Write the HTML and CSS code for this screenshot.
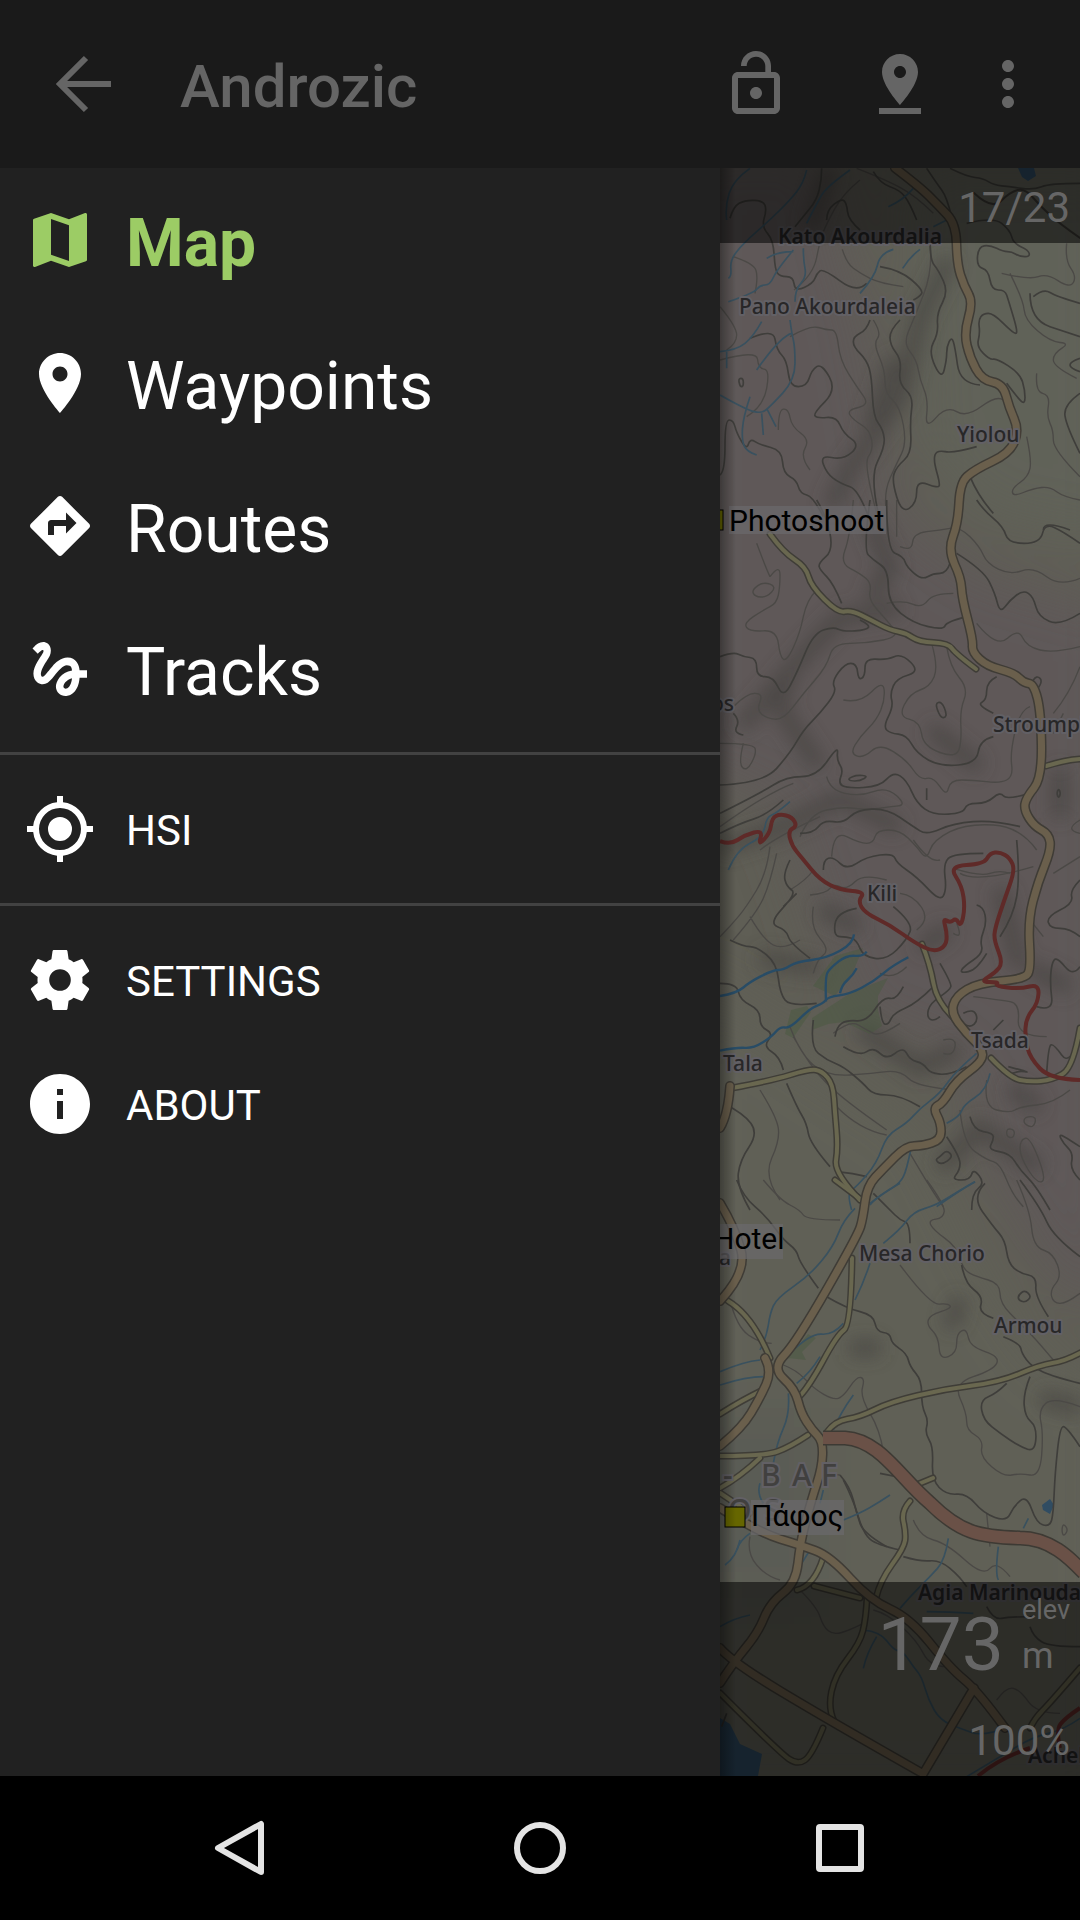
FILE: index.html
```html
<!DOCTYPE html>
<html lang="en">
<head>
<meta charset="utf-8">
<meta name="viewport" content="width=device-width, initial-scale=1">
<title>Androzic</title>
<link rel="stylesheet" href="styles.css">
</head>
<body>
<header class="toolbar">
  <button class="icon-button back" aria-label="Back"><svg class="icon" viewBox="0 0 72 72"><path d="M63 36H13M38 10 12 36l26 26" fill="none" stroke="currentColor" stroke-width="6"/></svg></button>
  <h1 class="title">Androzic</h1>
  <div class="actions">
    <button class="icon-button" aria-label="Unlock"><svg class="icon" viewBox="0 0 24 24"><path d="M18 8h-1V6c0-2.76-2.24-5-5-5S7 3.240 7 6h1.900c0-1.710 1.390-3.100 3.100-3.100s3.100 1.390 3.100 3.100v2H6c-1.100 0-2 .9-2 2v10c0 1.100.9 2 2 2h12c1.100 0 2-.9 2-2V10c0-1.100-.9-2-2-2zm0 12H6V10h12v10zm-6-3c1.100 0 2-.9 2-2s-.9-2-2-2-2 .9-2 2 .9 2 2 2z"/></svg></button>
    <button class="icon-button" aria-label="Drop waypoint"><svg class="icon" viewBox="0 0 24 24"><path d="M18 8c0-3.310-2.690-6-6-6S6 4.690 6 8c0 4.500 6 11 6 11s6-6.500 6-11zm-8 0c0-1.100.9-2 2-2s2 .9 2 2-.89 2-2 2c-1.100 0-2-.9-2-2zM5 20v2h14v-2H5z"/></svg></button>
    <button class="icon-button more" aria-label="More options"><svg class="icon" viewBox="0 0 24 24"><path d="M12 8c1.100 0 2-.9 2-2s-.9-2-2-2-2 .9-2 2 .9 2 2 2zm0 2c-1.100 0-2 .9-2 2s.9 2 2 2 2-.9 2-2-.9-2-2-2zm0 6c-1.100 0-2 .9-2 2s.9 2 2 2 2-.9 2-2-.9-2-2-2z"/></svg></button>
  </div>
</header>

<main class="content">
  <nav class="drawer" aria-label="Main">
    <ul class="group">
      <li><a class="item primary active" href="#map"><svg class="icon" viewBox="0 0 24 24"><path d="M20.500 3l-.16.030L15 5.100 9 3 3.360 4.900c-.21.070-.36.250-.36.480V20.500c0 .28.220.5.500.5l.16-.030L9 18.900l6 2.100 5.640-1.900c.21-.070.360-.250.360-.480V3.500c0-.28-.22-.5-.5-.5zM15 19l-6-2.110V5l6 2.110V19z"/></svg><span class="text">Map</span></a></li>
      <li><a class="item primary" href="#waypoints"><svg class="icon" viewBox="0 0 24 24"><path d="M12 2C8.130 2 5 5.130 5 9c0 5.250 7 13 7 13s7-7.750 7-13c0-3.870-3.130-7-7-7zm0 9.500c-1.380 0-2.500-1.120-2.500-2.500s1.120-2.500 2.500-2.500 2.500 1.120 2.500 2.500-1.120 2.500-2.500 2.500z"/></svg><span class="text">Waypoints</span></a></li>
      <li><a class="item primary" href="#routes"><svg class="icon" viewBox="0 0 24 24"><path d="M21.710 11.290l-9-9c-.39-.39-1.020-.39-1.410 0l-9 9c-.39.39-.39 1.020 0 1.410l9 9c.39.39 1.020.39 1.410 0l9-9c.39-.38.39-1.010 0-1.410zM14 14.500V12h-4v3H8v-4c0-.55.450-1 1-1h5V7.500l3.500 3.500-3.500 3.500z"/></svg><span class="text">Routes</span></a></li>
      <li><a class="item primary" href="#tracks"><svg class="icon" viewBox="0 0 24 24"><path d="M4.590 6.890c.7-.71 1.400-1.350 1.710-1.220.5.200 0 1.030-.3 1.520-.25.420-2.860 3.890-2.860 6.310 0 1.280.480 2.340 1.340 2.980.75.560 1.740.730 2.640.460 1.070-.31 1.950-1.400 3.060-2.770 1.210-1.490 2.830-3.440 4.080-3.440 1.630 0 1.650 1.010 1.760 1.790-3.780.64-5.380 3.670-5.380 5.370s1.440 3.090 3.210 3.090c1.630 0 4.290-1.330 4.690-6.100H21v-2.500h-2.470c-.15-1.650-1.090-4.200-4.030-4.200-2.250 0-4.180 1.910-4.940 2.840-.58.730-2.060 2.480-2.290 2.720-.25.300-.68.840-1.110.84-.45 0-.72-.83-.36-1.920.35-1.090 1.400-2.860 1.850-3.520.78-1.140 1.300-1.920 1.300-3.280C8.950 3.690 7.310 3 6.440 3 5.120 3 3.970 4 3.720 4.250c-.36.360-.66.660-.88.930l1.750 1.710zm9.290 11.660c-.31 0-.74-.26-.74-.72 0-.6.730-2.200 2.870-2.760-.3 2.690-1.430 3.480-2.130 3.480z"/></svg><span class="text">Tracks</span></a></li>
    </ul>
    <ul class="group">
      <li><a class="item" href="#hsi"><svg class="icon" viewBox="0 0 24 24"><path d="M12 8a4 4 0 1 0 0 8 4 4 0 0 0 0-8zm8.940 3A8.990 8.990 0 0 0 13 3.060V1h-2v2.060A8.990 8.990 0 0 0 3.060 11H1v2h2.060A8.990 8.990 0 0 0 11 20.940V23h2v-2.060A8.990 8.990 0 0 0 20.940 13H23v-2h-2.060zM12 19a7 7 0 1 1 0-14 7 7 0 0 1 0 14z"/></svg><span class="text">HSI</span></a></li>
    </ul>
    <ul class="group">
      <li><a class="item" href="#settings"><svg class="icon" viewBox="0 0 24 24"><path d="M19.430 12.980c.04-.32.070-.64.070-.98s-.03-.66-.07-.98l2.110-1.650c.19-.15.240-.42.120-.64l-2-3.460c-.12-.22-.39-.3-.61-.22l-2.490 1c-.52-.4-1.080-.73-1.690-.98l-.38-2.650C14.460 2.180 14.250 2 14 2h-4c-.25 0-.46.180-.49.420l-.38 2.650c-.61.250-1.170.590-1.690.980l-2.490-1c-.23-.09-.49 0-.61.220l-2 3.460c-.13.220-.07.490.12.640l2.110 1.650c-.04.320-.07.650-.07.980s.03.660.07.980l-2.110 1.650c-.19.150-.24.420-.12.640l2 3.460c.12.220.39.300.61.220l2.490-1c.52.400 1.080.730 1.690.980l.38 2.650c.03.240.24.420.49.420h4c.25 0 .46-.18.490-.42l.38-2.650c.61-.25 1.170-.59 1.690-.98l2.490 1c.23.090.49 0 .61-.22l2-3.460c.12-.22.070-.49-.12-.64l-2.110-1.650zM12 15.600A3.600 3.600 0 1 1 12 8.400a3.600 3.600 0 0 1 0 7.200z"/></svg><span class="text">SETTINGS</span></a></li>
      <li><a class="item" href="#about"><svg class="icon" viewBox="0 0 24 24"><path d="M12 2C6.480 2 2 6.480 2 12s4.480 10 10 10 10-4.480 10-10S17.520 2 12 2zm1 15h-2v-6h2v6zm0-8h-2V7h2v2z"/></svg><span class="text">ABOUT</span></a></li>
    </ul>
  </nav>

  <section class="map" id="map" aria-label="Map">
    <svg class="map-canvas" viewBox="0 0 360 1608" preserveAspectRatio="xMinYMin slice">
      <defs>
        <filter id="soft" x="-50%" y="-50%" width="200%" height="200%"><feGaussianBlur stdDeviation="9"/></filter>
        <filter id="softer" x="-50%" y="-50%" width="200%" height="200%"><feGaussianBlur stdDeviation="28"/></filter>
      </defs>
      <rect width="360" height="1608" fill="#5f5e55"/>
      <!-- land tint -->
      <g filter="url(#softer)">
        <path fill="#5f5958" d="M-40-20H110L120 60 150 160 180 340 260 400 400 440V880L260 900 210 880 130 850 60 640-40 600z"/>
        <path fill="#5f5958" d="M240 880H400V1160L330 1110 260 990z"/>
        <path fill="#616258" d="M190 0H400V380L260 350 200 280z"/>
        <path fill="#606157" d="M0 830 200 960 270 1100 330 1190 400 1220V1640H-40V800z"/>
        <path fill="#5a5b55" d="M-20 1240H100V1430H-20z"/>
      </g>
      <!-- hill shading -->
      <g class="shade" filter="url(#soft)">
        <path d="M110 0 90 60M230 90 200 150 180 230 130 300 110 340M175 190 150 260M150 350 170 400 150 430"/>
        <path d="M20 560 90 480 120 450 180 440M0 680 60 660 120 630 180 660M70 500 60 540 100 600M210 560 260 600"/>
        <path d="M100 740 140 760M40 790 100 800M140 860 200 900 240 880M200 780 230 760M280 720 300 800M310 800 350 820M340 600V650"/>
        <path d="M220 1000 260 960 320 1000M240 1130 230 1160M130 1180h30M320 1230 360 1240M290 920 320 940"/>
      </g>
      <!-- woodland -->
      <g fill="#47583f" opacity=".45">
        <path d="m93 818 22-30 28-8-10 24-18 24zM92 850l40-26 36-14-10 18v14l4 16-12 8-26-12-16 2-16 6zM71 842l16-4 4 6-18 26-8-4z"/>
        <path d="m60 1200 28-34 8 4-14 14 4 8-18-2-10 14z"/>
      </g>
      <!-- water -->
      <g fill="#304c62">
        <path d="m298 0 16 0 2 8-8 5-6-4zM322 1337l8-6 4 6-4 9-7-4zM0 1550l10 6 10 20 22 10-4 22H0z"/>
      </g>

      <!-- minor contours -->
      <g class="contour" transform="translate(-20 -8) scale(.333333)">
        <path d="M282 390 340 345 360 240 380 190 430 100 480 60 M427 268 440 310 480 340 540 370 610 380 M470 25 560 60 650 110 700 160M520 480 545 520 520 550 555 630 555 700 600 740 620 850 590 910 550 1000 560 1060M690 240 700 330 640 480 610 550 650 600 660 660 685 720 675 810 740 737 800 773 890 705 910 720M905 340 990 360 1040 340 1110 385 1130 350 1095 300 1100 250M930 340 970 420 975 480 1050 545 1110 550 1060 580 1060 620 1130 655M1010 640 1006 695 1050 705 1040 770 1060 810 1060 870 1140 950M980 830 995 900 985 950 935 985 940 1010 1000 985 1050 980 1090 1010 1140 1020M270 530 330 495 380 510 410 510 420 600 470 680 510 735 440 750 460 780 510 810 520 870 490 910 530 1060M60 600 170 570 175 625 210 630 190 740 140 770M235 810 235 750 265 745 275 800 330 840 300 890 330 930M60 440 110 500 110 550 80 570M100 290 160 310 175 350 165 400"/>
      </g>
      <g class="contour" transform="translate(-20 332) scale(.333333)">
        <path d="M210 230 240 190 240 260 230 310 190 330 130 370 150 395 230 390 240 470 260 485 300 400 320 300 350 270M170 130 200 210 210 230M155 270 190 245 230 260 200 292 165 290zM460 0 450 110 420 190 480 220 515 250 505 300 560 360 600 410 500 430 400 430 380 500 310 580 250 660 200 655 170 630 190 580 140 580 100 620M600 140 635 155 640 100 720 90 780 80 840 140 860 190 930 225 1000 200 1080 260 1140 235M560 310 610 300 665 325 700 280 760 280M830 370 890 445 955 385 980 440 1060 460 1140 440M695 430 715 500 690 560 630 580 595 650 660 665 670 740 770 775 785 720 780 630 805 565 750 500 740 440M430 600 480 610 550 540 555 600 530 660 480 710 450 760 490 775 540 730 620 780 660 840 700 830 740 890 750 840 820 840 900 850 940 830 930 760 960 630 990 620M60 730 160 730 170 760 140 815 115 790 130 730M380 830 390 870 480 890 560 860 620 915 570 920 500 930 430 920 330 940 300 1010M180 1050 230 1010 360 950M60 980 200 880 280 850M1090 640 1060 700M1140 1000 1090 990 1140 960M590 0 590 110M1060 640 1110 580 1140 500M395 1070 400 990 480 1030 520 1030 530 990 600 990 650 1040 680 1080 700 1020 800 970 960 980 1010 1050"/>
      </g>
      <g class="contour" transform="translate(-20 672) scale(.333333)">
        <path d="M210 20 200 100 140 200 90 260 60 290M230 40 210 130 170 220 100 300M270 150 320 120 340 90M150 230 190 300 250 330 300 300M330 165 380 160 400 130 440 150 490 100 560 120M340 200 330 260 390 330 350 360 340 400M600 160 640 165 690 240 650 270M760 85 840 110 900 90 930 100M640 0 690 70 720 60M760 280 790 300 770 250M780 100 830 130 1000 80M1060 100 1140 50M1030 290 990 240M280 590 330 680 430 780 560 870M270 560 300 640 380 710 520 700 600 690 650 740 760 750M400 580 450 540 500 570 540 590 600 550M540 400 580 420 620 380M820 470 900 480 960 490 950 590 1040 590M730 600 770 590 760 650 730 640M960 900 990 890 1040 1020 1010 1030 960 950zM975 830 1010 830 1000 865 970 850zM920 865 945 870 940 895 920 890zM860 720 850 800 930 820 960 800 1060 790 1110 750M780 810 790 910 860 960 900 970 940 1070 970 1100M180 750 230 830 240 900 190 1010 240 1080M410 800 480 870 560 885M630 940 700 1060 730 1100"/>
      </g>
      <g class="contour" transform="translate(-20 1012) scale(.333333)">
        <path d="M190 0 240 60 300 90 320 120 420 120M680 0 735 75 730 115 685 120 700 150 770 200 790 270 830 290 900 310 900 370 960 430 1010 480 1060 540M600 255 690 375 745 370 755 385 690 405 680 435 715 470 720 540 770 520 770 460 800 445 810 500 900 530 880 570 760 610 800 700 800 750 850 780 840 830 910 890 960 880 1020 890 1030 760 1015 690 1060 650 1140 680M950 0 990 90 1000 200 1060 220 1085 290 1050 330 1060 370 1100 370 1140 340M250 555 290 570 340 625 400 660 430 650 470 590 495 595 480 650 540 750 550 815M90 360 110 440 180 490 215 490M420 885 370 880M870 1100 860 1000"/>
      </g>
      <g class="contour" transform="translate(-20 1312) scale(.333333)">
        <path d="M640 120 660 170 740 190 850 290 890 240 930 290M150 170 140 220 200 290 240 300M300 330 350 380 370 440 400 465 450 450 490 430M520 390 560 400 650 480 690 560 740 560M890 660 920 620 960 630 1010 700 1080 700M1090 130 1105 150 1090 170 1085 150z"/>
      </g>

      <!-- index contours -->
      <g class="contour index" transform="translate(-20 -8) scale(.333333)">
        <path d="M365 25 365 60 350 120 310 170 285 200M90 175 100 140 135 120 190 122 200 150 185 200 220 240 225 330 240 350 280 350 285 395 340 370 350 340 370 325 470 400 500 370M520 35 540 70 600 90 630 130 650 180M380 180 380 150 425 115 440 130 445 180 480 210M680 25 710 70 740 110 755 170M750 25 800 50 850 55 880 75 930 80 1000 90 1050 70 1140 70M800 190 880 170 930 210 940 250 985 270 990 290 960 290 935 275 910 275 870 255 835 260 830 320 865 330 875 390 915 390 925 420 955 520 940 520 880 460 850 460 835 480 840 520 830 560 870 600 890 595 960 640 975 690 975 735 950 710 920 670M540 320 600 330 670 390 660 410 640 420M690 240 690 300 715 330 745 395 710 460 715 520 685 575 725 660 740 600 740 560 755 530 765 560 780 670 840 675M1000 410 1030 385 1070 410 1140 430M990 400 990 440 1020 490 1080 510 1140 530M1140 595 1110 605 1110 625 1140 635M510 480 500 510 460 530 460 560 500 600 515 650 520 770 550 810 555 860 510 950 535 1060M600 480 570 510 570 555 605 600 595 670 640 710 630 780 635 880 590 920 575 960 605 1060 650 1030 650 960 715 985 720 970 700 900 710 870 760 880 830 860M150 535 220 505 230 570 260 600 270 680 320 680 335 630 365 610 410 690 340 760 350 775 410 770 430 820 480 855 430 900 360 885 380 940 420 970 480 990 520 1110M60 945 75 935 75 780 100 780 110 820 140 870 150 835 180 855 245 870 250 940 290 960 300 1000 340 1010 370 1070M115 655 130 655 130 680 120 680zM1140 700 1090 735 1100 800 1140 880M810 950 835 1010 880 1060M1030 1110 1030 1080 1110 1110"/>
      </g>
      <g class="contour index" transform="translate(-20 332) scale(.333333)">
        <path d="M510 0 490 150 520 180 565 210 565 310 640 370 730 390 740 365 800 350M560 0 560 150 610 170 620 200 665 240 700 220 740 220 750 190M350 0 380 50 400 150 355 190 360 210 400 250 425 310M830 0 850 30 910 80 925 130 1020 130 1035 70 1090 95 1140 130M770 160 850 210 885 280 900 340 930 300 970 270 1000 290 1015 350 1080 378 1140 340M60 470 100 455 130 470 170 475 170 530 220 530 250 595 290 520 340 400 400 380 430 395 500 390 510 375 480 360M60 855 190 850 270 760 310 690 360 640 410 575 395 545 435 490 470 490 475 540 495 530 495 475 560 480 605 460 660 515 590 535 570 580 580 620 550 680 570 700 620 705 650 760 720 800 830 790 840 720 880 710M705 610 725 605 740 640 735 655 720 650zM890 530 860 545 860 600 830 615 880 640M60 940 180 880 260 830 350 830 415 735 410 780 430 810 415 850 440 865 540 860 580 815 620 840 650 910 700 945 790 940 800 910 860 910 900 875 920 900 990 880M60 1000 120 970 200 945 250 900M300 1000 340 1000 370 960 430 970 470 930 560 925 640 980 680 1005 760 970 880 960 960 980M680 865 680 900M1070 880 1076 865 1082 880 1076 895zM445 835 470 825 505 828 480 843 450 843zM100 640 120 660 100 700 130 705M1000 540 1010 525 1030 545 1010 570"/>
      </g>
      <g class="contour index" transform="translate(-20 672) scale(.333333)">
        <path d="M370 90 370 60 400 50 440 90 500 50 580 40 590 70 650 110 720 185 740 150 730 70 760 40 850 40M270 60 250 100 260 140 290 160 205 250 260 270 270 310 330 355M290 160 250 200M470 205 410 215 400 290 440 290 470 300 490 350 560 360 620 300 640 250 580 200M60 430 110 430 120 480 180 510 180 560 220 580 190 620 240 650 250 690M90 300 130 320 170 320 230 370 240 460 270 500 350 490M340 540 330 620 380 660 430 680 490 730 520 765 600 765 660 800M405 590 410 560 440 540 500 545 550 470 590 480 610 440M540 500 545 550 565 555 580 520 650 490 700 440M430 620 480 650 520 620 560 660 610 620 630 660 670 670 690 700 750 705 800 680M830 195 850 200 860 250 840 300 850 340 790 380 780 400 830 390 860 340M720 370 755 430 750 450 690 490 680 530 700 545 720 530M790 520 820 505 835 540 810 565 790 550M1140 120 1110 150 1120 190 1040 230 1050 265 1110 265 1140 290M950 0 960 110 940 230 900 290M1140 380 1120 410 1070 350 1055 370 1050 430 1060 515 1010 500M1140 590 1110 680 1060 610 1045 620 1040 700M720 950 740 930 760 950 725 975 705 960zM740 890 780 950 780 990 755 1020 810 1020 820 985 855 1030 815 1060 815 1110M810 830 820 870 880 880 880 900 865 930 930 940 960 990 1010 1040 1050 1110M1140 920 1110 900 1075 880 1090 910 1120 940 1110 990 1140 1020M70 790 130 820 175 880 120 960 110 1040 150 1110M260 730 290 800 320 850 330 910 390 980M410 995 460 1000 500 1010M60 225 30 240M910 540 880 570M925 680 1000 700 950 690 920 710"/>
      </g>
      <g class="contour index" transform="translate(-20 1012) scale(.333333)">
        <path d="M110 0 130 50 200 110 250 180 290 210 300 250 355 325M380 350 440 385 520 405 530 455 570 460 575 490 620 520 630 560 665 600 665 680 685 720 675 760 700 800 695 900 740 945 800 940 850 1000 920 1025 940 980 980 945 1010 1030 1050 1040 1060 1000 1065 880 1080 740 1100 740 1140 800M520 40 570 90 600 120 630 130 630 190M855 10 815 50 880 140 915 180 925 250 960 280 1010 290 1005 350 1045 410M960 0 1020 80 1060 170 1140 230M785 255 795 310 850 350 835 400 880 415M955 345 975 330 995 350 975 368 955 360zM910 470 960 490 965 520 995 560 1060 590 1140 610M990 590 970 640 975 710 1010 740 1005 815 960 800 900 760 850 720 840 660 890 640 920 610M420 885 450 920 470 1000 490 1060 560 1100M540 880 640 900"/>
      </g>
      <g class="contour index" transform="translate(-20 1312) scale(.333333)">
        <path d="M430 0 460 60 490 160 530 195 600 210M610 230 660 245 720 240 780 290 800 320M860 380 880 420 930 410 1000 410M990 440 1000 470 1050 500 1140 500M65 740 80 700"/>
      </g>

      <!-- streams -->
      <g class="stream" transform="translate(-20 -8) scale(.333333)">
        <path d="M150 25 100 60 75 140 80 180M320 30 310 70 270 120 210 180 130 250 90 300 95 350 85 355M450 30 380 80 350 130 320 190M280 270 230 330 210 375 180 375 160 400 85 425M200 295 230 275 280 275M310 265 310 300 320 350 285 390 285 425M580 268 540 280 525 350 480 400M660 268 630 290 608 325M640 85 610 120 565 140M740 180 700 200M270 480 275 520 285 560 285 660 210 740 185 760 140 750 60 705M60 575 110 570 160 530 185 485M275 520 240 530 170 630M150 710 130 770 125 840 140 875 170 885M185 760 190 825M200 745 228 800M80 575 80 625"/>
      </g>
      <g class="stream" transform="translate(-20 332) scale(.333333)"><path d="M270 905 230 940 200 950 190 1010 110 1050 85 1110"/></g>
      <g class="stream river" transform="translate(-20 672) scale(.333333)">
        <path d="M60 468 110 460 150 425 220 390 250 390 290 365 380 355 460 310 462 283M60 632 110 622 160 625 215 590 240 560 270 565 330 505 370 490 385 470 450 462 520 425 580 375 625 352M378 485 375 410 390 385 440 345 490 350 500 335M420 460 425 435 460 405 470 385"/>
      </g>
      <g class="stream" transform="translate(-20 672) scale(.333333)">
        <path d="M830 640 770 690 720 760 660 805 620 850 560 885 530 970 470 1040 440 1060 455 1110M870 700 860 750 790 795 780 830 740 850M632 930 620 990 600 1030 550 1060 510 1090M825 1025 780 1050 710 1100"/>
      </g>
      <g class="stream" transform="translate(-20 1012) scale(.333333)">
        <path d="M600 10 530 50 510 75M825 5 780 30 710 75 640 95 600 150 550 190M510 250 490 310 465 360M465 85 430 120 400 200 330 285 230 355 210 400 200 470 180 510M60 575 130 545 180 540M60 615 140 590 190 590M270 520 330 460 400 465 430 430M360 530 330 580 290 610M265 640 270 700 230 790 220 850M460 645 420 700 400 750M180 910 170 940 190 970M370 930 360 970M570 945 540 965 480 1000 430 1020M110 1110 120 1080 150 1060M985 1015 970 1045"/>
      </g>
      <g class="stream" transform="translate(-20 1312) scale(.333333)">
        <path d="M120 180 110 230 75 255M330 210 305 250M745 175 735 240 690 290 630 350 600 385M895 200 885 280 895 300M60 440 100 415 150 405M490 450 540 455 580 510 610 515 640 560 665 590 685 660 720 720 780 745 850 770 930 740M530 470 500 520 490 565M680 395 750 395 820 400M1140 715 1090 750 1000 770 900 830 800 890"/>
      </g>

      <!-- minor roads: casing, then fill -->
      <g class="road minor-case">
        <path d="M50 366 63 384 86 399 91 418 118 445 131 442 151 452 170 462 186 465 199 474 228 475 236 486 256 501"/>
        <path d="M326 598 345 592 360 591M202 776 210 796 217 835 236 852M12 920 50 913 90 901 102 903 113 916 115 945 118 980 114 1005 140 1032M271 890 290 910 310 914 332 912 353 900 360 860"/>
        <path d="M115 1012 143 1033M132 1090 131 1157 117 1167 90 1217 80 1228M8 1133 32 1147 50 1190M0 1246 22 1232 43 1222M107 1264 115 1253 140 1249 170 1234 225 1221 280 1214 320 1197 345 1193 360 1185M0 1288 45 1288 70 1279 88 1267M0 1320 20 1309 40 1290M196 1317 213 1310M190 1333 181 1343 186 1365 184 1380 160 1413 156 1430M0 1325 30 1345M77 1422 94 1418 103 1390M94 1418 140 1430M147 1430 146 1450 140 1475 115 1507 108 1540 114 1553M0 1525 60 1585 78 1597 92 1587 103 1560M360 1500 330 1535 315 1550 310 1560"/>
      </g>
      <g class="road minor">
        <path d="M50 366 63 384 86 399 91 418 118 445 131 442 151 452 170 462 186 465 199 474 228 475 236 486 256 501"/>
        <path d="M326 598 345 592 360 591M202 776 210 796 217 835 236 852M12 920 50 913 90 901 102 903 113 916 115 945 118 980 114 1005 140 1032M271 890 290 910 310 914 332 912 353 900 360 860"/>
        <path d="M115 1012 143 1033M132 1090 131 1157 117 1167 90 1217 80 1228M8 1133 32 1147 50 1190M0 1246 22 1232 43 1222M107 1264 115 1253 140 1249 170 1234 225 1221 280 1214 320 1197 345 1193 360 1185M0 1288 45 1288 70 1279 88 1267M0 1320 20 1309 40 1290M196 1317 213 1310M190 1333 181 1343 186 1365 184 1380 160 1413 156 1430M0 1325 30 1345M77 1422 94 1418 103 1390M94 1418 140 1430M147 1430 146 1450 140 1475 115 1507 108 1540 114 1553M0 1525 60 1585 78 1597 92 1587 103 1560M360 1500 330 1535 315 1550 310 1560"/>
      </g>
      <!-- main roads: casing, then fill -->
      <g class="road main-case">
        <path d="M175 0 200 19 219 38 236 56 237 96 244 118 253 134 244 165 250 190 262 212 283 216 289 239 299 262 290 285 254 302 240 315 238 355 228 382 241 410 242 430 253 472 252 484 267 498 294 505 304 515 314 516 321 545 322 610 306 630 304 642 314 658 329 666 331 682 318 714 308 752 311 800 305 811 258 815 236 828 231 845 246 865 262 880 263 893 236 913 223 935 213 940 221 955 221 972 202 978 186 978 164 1000 147 1018 143 1050 138 1067 76 1175 52 1200 75 1221 81 1245 92 1262 103 1273 102 1300 92 1330 80 1375 76 1415 50 1435 38 1465 13 1495 0 1515M45 1190 52 1203 40 1230 22 1260 0 1278M0 1035 15 1060 27 1104 0 1133M10 918 8 947 0 960M0 1340 40 1365 80 1377 110 1388 150 1432 190 1450 230 1500 258 1523 285 1560M0 1480 12 1494 110 1553 200 1604M254 1520 203 1606"/>
      </g>
      <g class="road main">
        <path d="M175 0 200 19 219 38 236 56 237 96 244 118 253 134 244 165 250 190 262 212 283 216 289 239 299 262 290 285 254 302 240 315 238 355 228 382 241 410 242 430 253 472 252 484 267 498 294 505 304 515 314 516 321 545 322 610 306 630 304 642 314 658 329 666 331 682 318 714 308 752 311 800 305 811 258 815 236 828 231 845 246 865 262 880 263 893 236 913 223 935 213 940 221 955 221 972 202 978 186 978 164 1000 147 1018 143 1050 138 1067 76 1175 52 1200 75 1221 81 1245 92 1262 103 1273 102 1300 92 1330 80 1375 76 1415 50 1435 38 1465 13 1495 0 1515M45 1190 52 1203 40 1230 22 1260 0 1278M0 1035 15 1060 27 1104 0 1133M10 918 8 947 0 960M0 1340 40 1365 80 1377 110 1388 150 1432 190 1450 230 1500 258 1523 285 1560M0 1480 12 1494 110 1553 200 1604M254 1520 203 1606"/>
      </g>
      <g class="trunk-road">
        <path class="trunk-case" d="M103 1270H125C160 1272 180 1310 210 1335 240 1365 260 1369 300 1370 330 1370 350 1390 364 1405"/>
        <path class="trunk" d="M103 1270H125C160 1272 180 1310 210 1335 240 1365 260 1369 300 1370 330 1370 350 1390 364 1405"/>
      </g>
      <g class="road path"><path d="M254 25 272 42 290 24 305 20 320 38 340 56 360 70"/></g>

      <!-- recorded track -->
      <g class="track">
        <path d="M0 673 10 677 25 667 43 662 38 678 50 665 52 650 60 646 72 649 77 658 68 663 72 678 82 690 100 712 120 722 145 724 138 733 145 745 170 757 195 775 214 784 226 778 227 765 223 750 230 755 236 750 241 759 245 740 242 718 229 698 264 696 270 685 280 684 290 690 295 702 285 730 275 760 274 772 283 795 275 805 260 814 279 814 275 818 300 821 319 816 318 835 306 850 305 870 310 890 330 911 360 912M360 1540 345 1550 336 1562 340 1580M258 1608 280 1590 310 1580"/>
      </g>

      <!-- place names -->
      <g class="place">
        <text class="bold" x="58" y="76">Kato Akourdalia</text>
        <text x="19" y="146">Pano Akourdaleia</text>
        <text x="237" y="274">Yiolou</text>
        <text x="-9" y="543">os</text>
        <text x="273" y="564">Stroumpi</text>
        <text x="147" y="733">Kili</text>
        <text x="251" y="880">Tsada</text>
        <text x="3" y="903">Tala</text>
        <text x="139" y="1093">Mesa Chorio</text>
        <text x="274" y="1165">Armou</text>
        <text x="-1" y="1097">a</text>
        <text class="bold" x="198" y="1432">Agia Marinouda</text>
        <text class="bold" x="308" y="1595">Acheleia</text>
      </g>
      <g class="district">
        <text x="3" y="1318">-</text><text x="41" y="1318">B</text><text x="72" y="1318">A</text><text x="101" y="1318">F</text>
        <text x="8" y="1353">O</text><text x="44" y="1353">S</text>
      </g>

      <!-- waypoints -->
      <g class="waypoint">
        <rect class="plate" x="9" y="338" width="157" height="28"/>
        <rect class="marker" x="-17" y="342" width="20" height="20"/>
        <text x="9" y="363">Photoshoot</text>
        <rect class="plate" x="-10" y="1056" width="73" height="35"/>
        <text x="-7" y="1081">Hotel</text>
        <rect class="plate" x="31" y="1332" width="93" height="35"/>
        <rect class="marker" x="5" y="1339" width="20" height="20"/>
        <text x="31" y="1358">Πάφος</text>
      </g>
    </svg>

    <div class="panel panel-top"><output class="reading">17/23</output></div>
    <div class="panel panel-bottom">
      <div class="elevation">
        <output class="value">173</output>
        <div class="units"><span class="label">elev</span><span class="unit">m</span></div>
      </div>
      <output class="reading">100%</output>
    </div>
  </section>
</main>

<nav class="system-bar" aria-label="System">
  <button class="system-button" aria-label="Back"><svg class="icon" viewBox="0 0 72 72"><path d="M57 12v48L14 36z"/></svg></button>
  <button class="system-button" aria-label="Home"><svg class="icon" viewBox="0 0 72 72"><circle cx="36" cy="36" r="23"/></svg></button>
  <button class="system-button" aria-label="Recent apps"><svg class="icon" viewBox="0 0 72 72"><rect x="15" y="15" width="42" height="42" rx="1"/></svg></button>
</nav>
<script src="map.js"></script>
</body>
</html>
```

FILE: styles.css
```css
* {
  box-sizing: border-box;
}

body {
  margin: 0;
  min-height: 100vh;
  display: flex;
  flex-direction: column;
  background: #000;
  color: #fff;
  font-family: Roboto, "Noto Sans", sans-serif;
}

button {
  padding: 0;
  border: 0;
  background: none;
  color: inherit;
  font: inherit;
}

.icon {
  display: block;
  flex: none;
  width: 72px;
  height: 72px;
  fill: currentColor;
}

/* Toolbar */
.toolbar {
  display: flex;
  align-items: center;
  height: 168px;
  padding: 0 36px 0 48px;
  background: #1a1a1a;
  color: #656565;
}

.title {
  margin: 0 0 0 60px;
  padding-top: 6px;
  font-size: 60px;
  line-height: 72px;
  font-weight: 500;
}

.actions {
  display: flex;
  gap: 72px;
  margin-left: auto;
}

.more {
  margin-left: -36px;
}

/* Content */
.content {
  flex: 1;
  display: grid;
  grid-template-columns: 2fr 1fr;
}

/* Drawer */
.drawer {
  background: #212121;
}

.group {
  margin: 0;
  padding: 0 0 12px;
  list-style: none;
}

.group + .group {
  padding-top: 12px;
  border-top: 3px solid #424242;
}

.item {
  display: flex;
  align-items: center;
  gap: 30px;
  height: 124px;
  padding-left: 24px;
  color: #fff;
  font-size: 42px;
  line-height: 48px;
  text-decoration: none;
}

.text {
  padding-top: 4px;
}

.primary {
  height: 143px;
  font-size: 66px;
  line-height: 76px;
}

.primary .text {
  padding-top: 8px;
}

.active {
  color: #9ccc65;
  font-weight: 700;
}

/* Map */
.map {
  position: relative;
  display: flex;
  flex-direction: column;
  justify-content: space-between;
  overflow: hidden;
}

.map-canvas {
  position: absolute;
  inset: 0;
  width: 100%;
  height: 100%;
}

.map::after {
  content: "";
  position: absolute;
  inset: 0 auto 0 0;
  width: 16px;
  background: linear-gradient(90deg, rgba(0, 0, 0, .35), transparent);
}

.shade {
  fill: none;
  stroke: #45423f;
  stroke-width: 16;
  opacity: .7;
}

.contour {
  fill: none;
  stroke: #4b4946;
  stroke-width: 4;
  stroke-linejoin: round;
}

.index {
  stroke: #3f3e3b;
  stroke-width: 5;
}

.stream {
  fill: none;
  stroke: #39515f;
  stroke-width: 5;
  stroke-linejoin: round;
}

.river {
  stroke: #284c66;
  stroke-width: 7;
}

.road {
  fill: none;
  stroke-linejoin: round;
  stroke-linecap: round;
}

.minor-case {
  stroke: #3f3d37;
  stroke-width: 7;
}

.minor {
  stroke: #69674f;
  stroke-width: 4;
}

.main-case {
  stroke: #3f3c36;
  stroke-width: 10;
}

.main {
  stroke: #6a5f4c;
  stroke-width: 7;
}

.trunk-road {
  fill: none;
}

.trunk {
  stroke: #6a5147;
  stroke-width: 12;
}

.trunk-case {
  stroke: #3d3a34;
  stroke-width: 15;
}

.path {
  stroke: #3b3934;
  stroke-width: 2;
}

.track {
  fill: none;
  stroke: #5f2a28;
  stroke-width: 4;
  stroke-linejoin: round;
}

.place {
  fill: #282728;
  stroke: #626065;
  stroke-width: 4;
  stroke-linejoin: round;
  paint-order: stroke;
  font-family: "Noto Sans", sans-serif;
  font-size: 21px;
  font-weight: 500;
}

.bold {
  font-weight: 600;
}

.district {
  fill: #41403f;
  stroke: #626065;
  stroke-width: 4;
  paint-order: stroke;
  font-family: "Noto Sans", sans-serif;
  font-size: 30px;
  font-weight: 500;
}

.waypoint {
  fill: #000;
  font-size: 30px;
}

.plate {
  fill: #6b696c;
  fill-opacity: .7;
}

.marker {
  fill: #666600;
  stroke: #000;
}

.panel {
  position: relative;
  padding-right: 10px;
  background: rgba(0, 0, 0, .53);
  color: #666;
  text-align: right;
}

.panel-top {
  padding-top: 16px;
  padding-bottom: 11px;
}

.reading {
  display: block;
  font-size: 42px;
  line-height: 48px;
}

.panel-bottom {
  padding-top: 10px;
  padding-bottom: 11px;
}

.elevation {
  display: flex;
  justify-content: flex-end;
  gap: 18px;
  height: 125px;
}

.value {
  padding-top: 8px;
  font-size: 75px;
  line-height: 88px;
}

.units {
  display: flex;
  flex-direction: column;
  gap: 4px;
  text-align: left;
}

.label {
  font-size: 27px;
  line-height: 36px;
}

.unit {
  font-size: 36px;
  line-height: 48px;
}

/* System bar */
.system-bar {
  display: flex;
  justify-content: center;
  height: 144px;
  background: #000;
  color: #e4e4e4;
}

.system-button {
  display: grid;
  place-items: center;
  flex: 0 1 300px;
}

.system-button .icon {
  fill: none;
  stroke: currentColor;
  stroke-width: 6;
  stroke-linejoin: round;
}
```

FILE: map.js
```js
// Rounds the surveyed polylines into curves that run through each segment's midpoint.
function smoothLine(source) {
  const closed = /z/i.test(source);
  const values = source.match(/-?[\d.]+/g).map(Number);
  const points = [];
  for (let i = 0; i + 1 < values.length; i += 2) {
    points.push([values[i], values[i + 1]]);
  }
  const mid = (a, b) => [(a[0] + b[0]) / 2, (a[1] + b[1]) / 2];
  if (closed) {
    const count = points.length;
    let d = "M" + mid(points[count - 1], points[0]);
    points.forEach((point, i) => {
      d += "Q" + point + " " + mid(point, points[(i + 1) % count]);
    });
    return d + "Z";
  }
  let d = "M" + points[0];
  for (let i = 1; i < points.length - 1; i++) {
    const end = i === points.length - 2 ? points[i + 1] : mid(points[i], points[i + 1]);
    d += "Q" + points[i] + " " + end;
  }
  return points.length === 2 ? d + "L" + points[1] : d;
}

document.querySelectorAll(".contour path, .stream path, .road path, .track path").forEach((path) => {
  const lines = path.getAttribute("d").split("M").filter((line) => line.trim());
  path.setAttribute("d", lines.map(smoothLine).join(""));
});
```
